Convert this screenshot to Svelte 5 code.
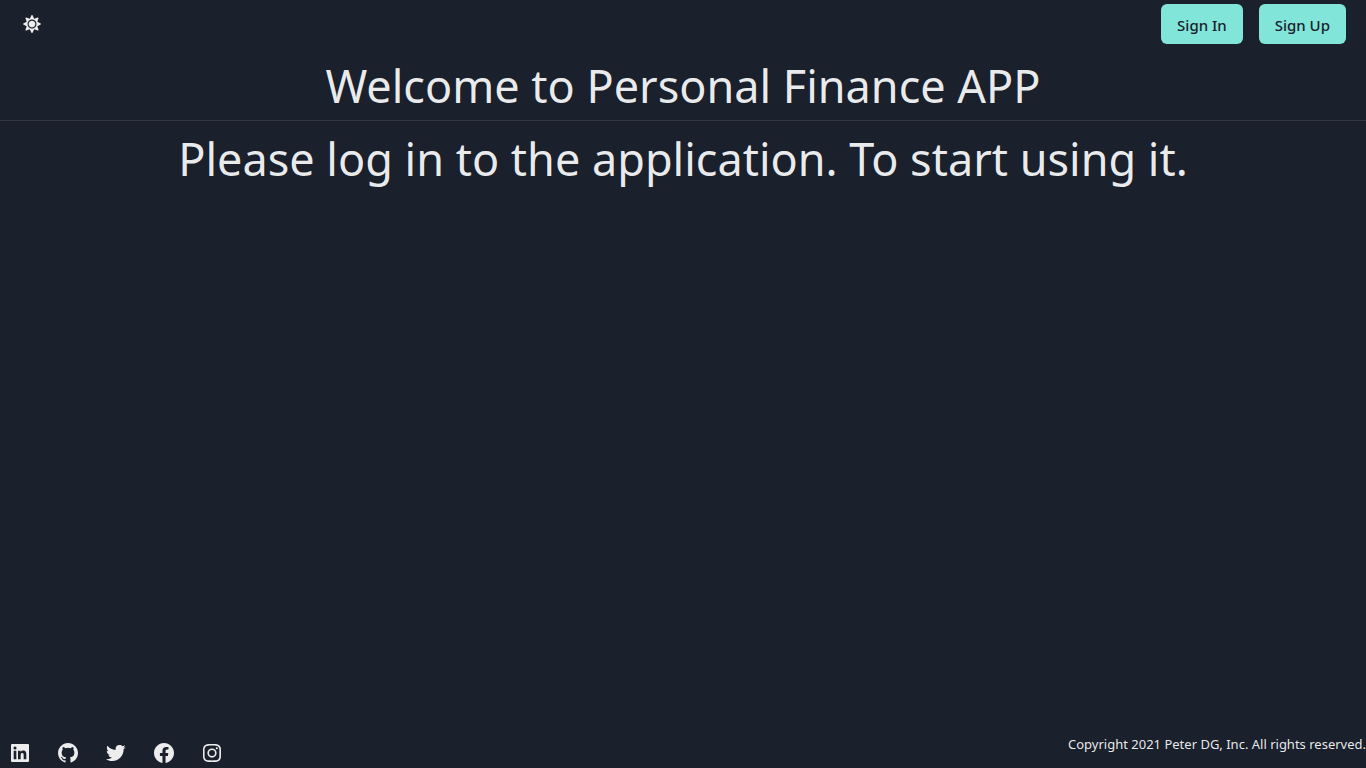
<script>
  const links = [
    { name: 'LinkedIn', d: 'M20 3H4a1 1 0 0 0-1 1v16a1 1 0 0 0 1 1h16a1 1 0 0 0 1-1V4a1 1 0 0 0-1-1zM8.339 18.337H5.667v-8.59h2.672v8.59zM7.003 8.574a1.548 1.548 0 1 1 0-3.096 1.548 1.548 0 0 1 0 3.096zm11.335 9.763h-2.669V14.16c0-.996-.018-2.277-1.388-2.277-1.39 0-1.601 1.086-1.601 2.207v4.248h-2.667v-8.59h2.56v1.174h.037c.355-.675 1.227-1.387 2.524-1.387 2.704 0 3.203 1.778 3.203 4.092v4.71z' },
    { name: 'GitHub', d: 'M12.026 2c-5.509 0-9.974 4.465-9.974 9.974 0 4.406 2.857 8.145 6.821 9.465.499.09.679-.217.679-.481 0-.237-.008-.865-.011-1.696-2.775.602-3.361-1.338-3.361-1.338-.452-1.152-1.107-1.459-1.107-1.459-.905-.619.069-.605.069-.605 1.002.07 1.527 1.028 1.527 1.028.89 1.524 2.336 1.084 2.902.829.091-.645.351-1.085.635-1.334-2.214-.251-4.542-1.107-4.542-4.93 0-1.087.389-1.979 1.024-2.675-.101-.253-.446-1.268.099-2.64 0 0 .837-.269 2.742 1.021a9.582 9.582 0 0 1 2.496-.336 9.554 9.554 0 0 1 2.496.336c1.906-1.291 2.742-1.021 2.742-1.021.545 1.372.203 2.387.099 2.64.64.696 1.024 1.587 1.024 2.675 0 3.833-2.33 4.675-4.552 4.922.355.308.675.916.675 1.846 0 1.334-.012 2.41-.012 2.737 0 .267.178.577.687.479C19.146 20.115 22 16.379 22 11.974 22 6.465 17.535 2 12.026 2z' },
    { name: 'Twitter', d: 'M19.633 7.997c.013.175.013.349.013.523 0 5.325-4.053 11.461-11.46 11.461-2.282 0-4.402-.661-6.186-1.809.324.037.636.05.973.05a8.07 8.07 0 0 0 5.001-1.721 4.036 4.036 0 0 1-3.767-2.793c.249.037.499.062.761.062.361 0 .724-.05 1.061-.137a4.027 4.027 0 0 1-3.23-3.953v-.05c.537.299 1.16.486 1.82.511a4.022 4.022 0 0 1-1.796-3.354c0-.748.199-1.434.548-2.032a11.457 11.457 0 0 0 8.306 4.215c-.062-.3-.1-.611-.1-.923a4.026 4.026 0 0 1 4.028-4.028c1.16 0 2.207.486 2.943 1.272a7.957 7.957 0 0 0 2.556-.973 4.02 4.02 0 0 1-1.771 2.22 8.073 8.073 0 0 0 2.319-.624 8.645 8.645 0 0 1-2.019 2.083z' },
    { name: 'Facebook', d: 'M12.001 2.002c-5.522 0-9.999 4.477-9.999 9.999 0 4.99 3.656 9.126 8.437 9.879v-6.988h-2.54v-2.891h2.54V9.798c0-2.508 1.493-3.891 3.776-3.891 1.094 0 2.24.195 2.24.195v2.459h-1.264c-1.24 0-1.628.772-1.628 1.563v1.875h2.771l-.443 2.891h-2.328v6.988C18.344 21.129 22 16.992 22 12.001c0-5.522-4.477-9.999-9.999-9.999z' },
    { name: 'Instagram', d: 'M11.999 7.377a4.623 4.623 0 1 0 0 9.248 4.623 4.623 0 0 0 0-9.248zm0 7.627a3.004 3.004 0 1 1 0-6.008 3.004 3.004 0 0 1 0 6.008zM15.728 7.207a1.078 1.078 0 1 0 2.156 0 1.078 1.078 0 1 0-2.156 0zM20.533 6.111A4.605 4.605 0 0 0 17.9 3.479a6.606 6.606 0 0 0-2.186-.42c-.963-.042-1.268-.054-3.71-.054s-2.755 0-3.71.054a6.554 6.554 0 0 0-2.184.42 4.6 4.6 0 0 0-2.633 2.632 6.585 6.585 0 0 0-.419 2.186c-.043.962-.056 1.267-.056 3.71 0 2.442 0 2.753.056 3.71.015.748.156 1.486.419 2.187a4.61 4.61 0 0 0 2.634 2.632 6.584 6.584 0 0 0 2.185.45c.963.042 1.268.055 3.71.055s2.755 0 3.71-.055a6.615 6.615 0 0 0 2.186-.419 4.613 4.613 0 0 0 2.633-2.633c.263-.7.404-1.438.419-2.186.043-.962.056-1.267.056-3.71s0-2.753-.056-3.71a6.581 6.581 0 0 0-.421-2.217zm-1.218 9.532a5.043 5.043 0 0 1-.311 1.688 2.987 2.987 0 0 1-1.712 1.711 4.985 4.985 0 0 1-1.67.311c-.95.044-1.218.055-3.654.055-2.438 0-2.687 0-3.655-.055a4.96 4.96 0 0 1-1.669-.311 2.985 2.985 0 0 1-1.719-1.711 5.08 5.08 0 0 1-.311-1.669c-.043-.95-.053-1.218-.053-3.654 0-2.437 0-2.686.053-3.655a5.038 5.038 0 0 1 .311-1.687c.305-.789.93-1.41 1.719-1.712a5.01 5.01 0 0 1 1.669-.311c.951-.043 1.218-.055 3.655-.055s2.687 0 3.654.055a4.96 4.96 0 0 1 1.67.311 2.991 2.991 0 0 1 1.712 1.712 5.08 5.08 0 0 1 .311 1.669c.043.951.055 1.218.055 3.655 0 2.436 0 2.698-.043 3.654z' }
  ];
</script>

<div class="page">
  <header>
    <button class="theme" aria-label="Toggle color mode">
      <svg viewBox="0 0 512 512" width="18" height="18" aria-hidden="true">
        <path d="M256 160c-52.9 0-96 43.1-96 96s43.1 96 96 96 96-43.1 96-96-43.1-96-96-96zm246.4 80.5l-94.7-47.3 33.5-100.4c4.5-13.6-8.4-26.5-21.9-21.9l-100.4 33.5-47.4-94.8c-6.4-12.8-24.6-12.8-31 0l-47.3 94.7L92.7 70.8c-13.6-4.5-26.5 8.4-21.9 21.9l33.5 100.4-94.7 47.4c-12.8 6.4-12.8 24.6 0 31l94.7 47.3-33.5 100.5c-4.5 13.6 8.4 26.5 21.9 21.9l100.4-33.5 47.3 94.7c6.4 12.8 24.6 12.8 31 0l47.3-94.7 100.4 33.5c13.6 4.5 26.5-8.4 21.9-21.9l-33.5-100.4 94.7-47.3c13-6.5 13-24.7.2-31.1zm-155.9 106c-49.9 49.9-131.1 49.9-181 0-49.9-49.9-49.9-131.1 0-181 49.9-49.9 131.1-49.9 181 0 49.9 49.9 49.9 131.1 0 181z" />
      </svg>
    </button>
    <nav>
      <button class="action">Sign In</button>
      <button class="action">Sign Up</button>
    </nav>
  </header>

  <main>
    <h1>Welcome to Personal Finance APP</h1>
    <hr />
    <p>Please log in to the application. To start using it.</p>
  </main>

  <footer>
    <div class="social">
      {#each links as link}
        <a href="#{link.name.toLowerCase()}" aria-label={link.name}>
          <svg viewBox="0 0 24 24" width="24" height="24" aria-hidden="true"><path d={link.d} /></svg>
        </a>
      {/each}
    </div>
    <small>Copyright 2021 Peter DG, Inc. All rights reserved.</small>
  </footer>
</div>

<style>
  :global(body) {
    margin: 0;
    background: #1a202c;
  }
  .page {
    min-height: 100vh;
    display: flex;
    flex-direction: column;
    color: rgba(255, 255, 255, 0.92);
    font-family: "Segoe UI", "Noto Sans", "Open Sans", sans-serif;
  }
  svg {
    display: block;
    fill: currentColor;
  }
  header {
    display: flex;
    align-items: center;
    justify-content: space-between;
    padding: 4px 20px 4px 12px;
  }
  button {
    height: 40px;
    border: 0;
    border-radius: 6px;
    font: inherit;
    cursor: pointer;
  }
  .theme {
    display: grid;
    place-items: center;
    width: 40px;
    padding: 0;
    background: none;
    color: inherit;
  }
  nav {
    display: flex;
    gap: 16px;
  }
  .action {
    padding: 2px 16px 0;
    background: #81e6d9;
    color: #1a202c;
    font-size: 15px;
    font-weight: 500;
  }
  main {
    flex: 1;
    text-align: center;
  }
  h1,
  p {
    margin: 0;
    padding-top: 4px;
    font-size: 45px;
    font-weight: 400;
    line-height: 68px;
  }
  hr {
    margin: 0;
    border: 0;
    border-top: 1px solid rgba(255, 255, 255, 0.1);
  }
  footer {
    display: flex;
    align-items: flex-start;
    justify-content: space-between;
  }
  .social {
    display: flex;
    gap: 24px;
    padding: 8px 8px 3px;
  }
  .social a {
    color: inherit;
  }
  small {
    font-size: 13px;
    line-height: 22px;
  }
</style>
